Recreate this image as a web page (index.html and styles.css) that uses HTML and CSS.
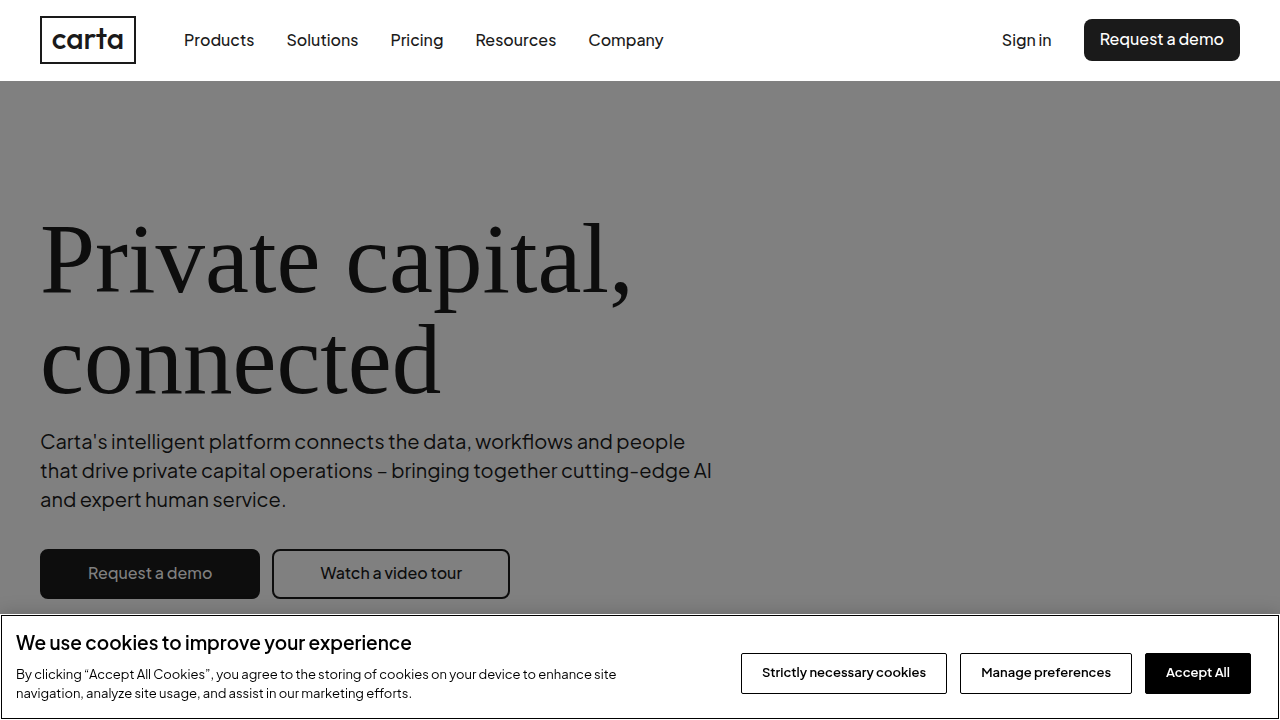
FILE: index.html
```html
<!DOCTYPE html>
<html lang="en">
<head>
    <meta charset="UTF-8">
    <meta name="viewport" content="width=device-width, initial-scale=1.0">
    <title>Carta</title>
    <link rel="stylesheet" href="styles.css">
</head>
<body>
    <header class="header">
        <a href="#" class="logo">carta</a>
        <nav class="nav">
            <a href="#">Products</a>
            <a href="#">Solutions</a>
            <a href="#">Pricing</a>
            <a href="#">Resources</a>
            <a href="#">Company</a>
        </nav>
        <div class="actions">
            <a href="#" class="sign-in">Sign in</a>
            <a href="#" class="demo">Request a demo</a>
        </div>
    </header>

    <main class="hero">
        <h1>Private capital, connected</h1>
        <p>Carta's intelligent platform connects the data, workflows and people that drive private capital operations – bringing together cutting-edge AI and expert human service.</p>
        <div class="buttons">
            <a href="#" class="button primary">Request a demo</a>
            <a href="#" class="button">Watch a video tour</a>
        </div>
    </main>

    <section class="cookies" role="dialog" aria-labelledby="cookie-title">
        <div class="cookie-text">
            <h2 id="cookie-title">We use cookies to improve your experience</h2>
            <p>By clicking “Accept All Cookies”, you agree to the storing of cookies on your device to enhance site navigation, analyze site usage, and assist in our marketing efforts.</p>
        </div>
        <div class="cookie-buttons">
            <button type="button">Strictly necessary cookies</button>
            <button type="button">Manage preferences</button>
            <button type="button" class="accept">Accept All</button>
        </div>
    </section>
</body>
</html>
```
FILE: styles.css
```css
* {
    box-sizing: border-box;
}
body {
    margin: 0;
    min-height: 100vh;
    background: #808080;
    color: #0d0d0d;
    font-family: "Plus Jakarta Sans", Inter, sans-serif;
}
a {
    color: inherit;
    text-decoration: none;
}
.header {
    display: flex;
    align-items: center;
    padding: 16px 40px;
    border-bottom: 1px solid #fff;
    background: #fff;
    color: #1a1a1a;
    font-size: 16px;
    font-weight: 500;
}
.logo {
    width: 96px;
    padding-bottom: 4px;
    border: 2px solid #1a1a1a;
    font-family: Outfit, Urbanist, Lexend, Lato, sans-serif;
    font-size: 30px;
    font-weight: 500;
    line-height: 40px;
    text-align: center;
}
.nav {
    display: flex;
    gap: 32px;
    margin-left: 48px;
    padding-bottom: 2px;
}
.actions {
    display: flex;
    align-items: center;
    gap: 32px;
    margin-left: auto;
}
.sign-in {
    padding-bottom: 2px;
}
.demo {
    padding: 0 16px 2px;
    border-radius: 8px;
    background: #1a1a1a;
    color: #fff;
    line-height: 40px;
}
.hero {
    max-width: 758px;
    padding: 127px 40px 120px;
}
.hero h1 {
    margin: 0;
    font-family: "Liberation Serif", serif;
    font-size: 99px;
    font-weight: 400;
    line-height: 101px;
}
.hero p {
    margin: 16px 0 36px;
    font-size: 20px;
    line-height: 29px;
}
.buttons {
    display: flex;
    gap: 12px;
}
.button {
    padding: 0 46px 2px;
    border: 2px solid #0d0d0d;
    border-radius: 8px;
    font-size: 16px;
    font-weight: 500;
    line-height: 44px;
}
.primary {
    background: #0d0d0d;
    color: #808080;
}
.cookies {
    position: fixed;
    right: 0;
    bottom: 0;
    left: 0;
    display: flex;
    align-items: flex-end;
    justify-content: space-between;
    padding: 14px 29px 16px 16px;
    outline: 1px solid #000;
    outline-offset: -2px;
    background: #fff;
    box-shadow: 0 0 18px rgba(0, 0, 0, 0.2);
    color: #000;
}
.cookie-text {
    width: 620px;
}
.cookie-text h2 {
    margin: 0 0 9px;
    font-size: 19px;
    font-weight: 600;
    line-height: 28px;
}
.cookie-text p {
    margin: 0;
    padding-bottom: 1px;
    font-size: 13px;
    line-height: 19px;
}
.cookie-buttons {
    display: flex;
    gap: 13px;
    margin-bottom: 10px;
}
.cookie-buttons button {
    padding: 0 20px 2px;
    border: 1px solid #000;
    border-radius: 2px;
    background: #fff;
    color: #000;
    font: 600 13px/37px "Plus Jakarta Sans", Inter, sans-serif;
}
.cookie-buttons .accept {
    background: #000;
    color: #fff;
}
```
